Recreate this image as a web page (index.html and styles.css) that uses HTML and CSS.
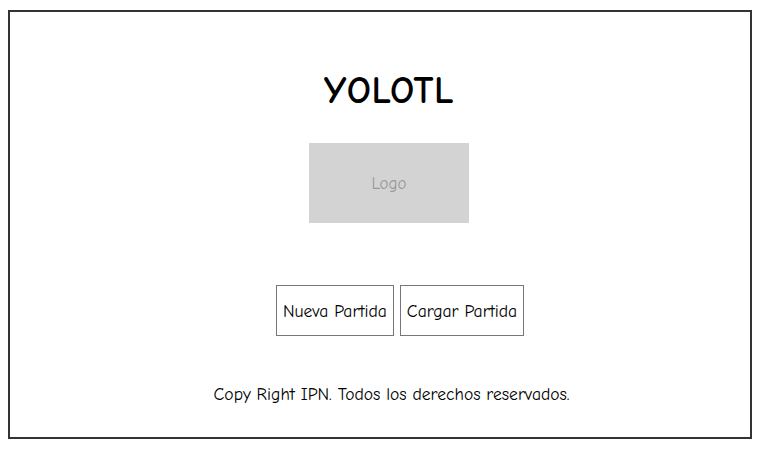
FILE: index.html
```html
<!DOCTYPE html>
<html lang="es">
<head>
<meta charset="utf-8">
<title>YOLOTL</title>
<link rel="stylesheet" href="styles.css">
</head>
<body>
<main class="frame">
  <h1 class="title">YOLOTL</h1>
  <div class="logo">Logo</div>
  <div class="actions">
    <button class="btn">Nueva Partida</button>
    <button class="btn">Cargar Partida</button>
  </div>
  <footer class="footer">Copy Right IPN. Todos los derechos reservados.</footer>
</main>
</body>
</html>
```
FILE: styles.css
```css
html, body {
  margin: 0;
  padding: 0;
  background: #fff;
}
body {
  font-family: "Comic Sans MS", "Comic Neue", "DejaVu Sans", sans-serif;
  color: #000;
}
.frame {
  box-sizing: border-box;
  width: 744px;
  height: 429px;
  margin: 10px 0 0 8px;
  border: 2px solid #333;
  display: flex;
  flex-direction: column;
  align-items: center;
  padding-left: 18px;
}
.title {
  margin: 59px 0 0;
  height: 40px;
  font-size: 38px;
  line-height: 40px;
  font-weight: bold;
  letter-spacing: 0.5px;
}
.logo {
  margin-top: 32px;
  width: 160px;
  height: 80px;
  background: #d3d3d3;
  color: #999;
  font-size: 17px;
  display: flex;
  align-items: center;
  justify-content: center;
}
.actions {
  margin-top: 62px;
  margin-left: 22px;
  display: flex;
  gap: 6px;
}
.btn {
  box-sizing: border-box;
  height: 51px;
  padding: 0 6px;
  background: #fff;
  border: 1px solid #777;
  font-family: inherit;
  font-size: 17.6px;
  color: #000;
}
.footer {
  margin-top: 48px;
  font-size: 17.6px;
  margin-left: 5px;
}
```
